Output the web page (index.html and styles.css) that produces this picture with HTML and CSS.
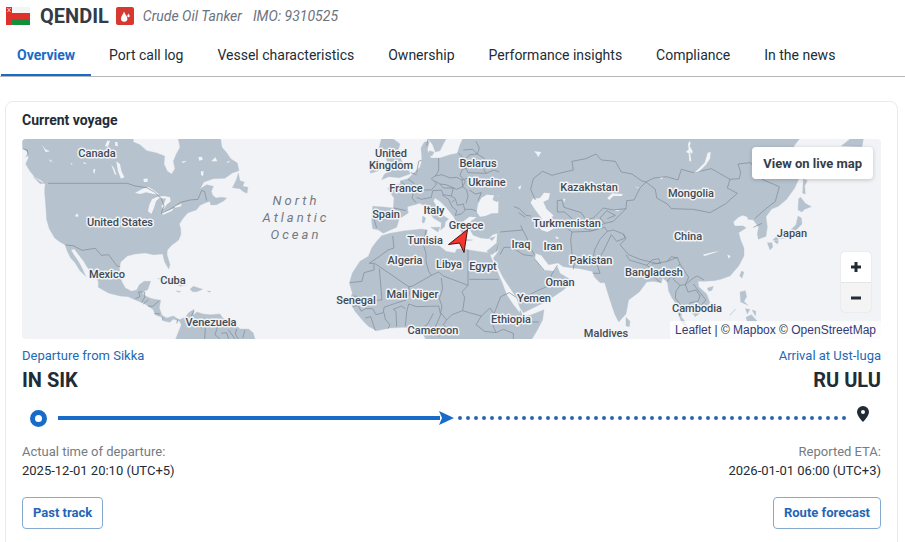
FILE: index.html
```html
<!DOCTYPE html>
<html lang="en">
<head>
<meta charset="utf-8">
<title>QENDIL - Crude Oil Tanker</title>
<link rel="stylesheet" href="styles.css">
</head>
<body>
<header class="vessel">
  <svg class="flag" viewBox="0 0 24 18" role="img" aria-label="Oman">
    <path fill="#f4f4f4" d="M0 0h24v6H0z"/><path fill="#e0302c" d="M0 0h6v18H0zM6 6h18v6H6z"/><path fill="#12903c" d="M6 12h18v6H6z"/>
    <path d="M1 1l4 4M5 1L1 5M3 1v4" stroke="#f6b9b5" stroke-width=".8"/>
  </svg>
  <h1 class="vessel-name">QENDIL</h1>
  <svg class="type-icon" viewBox="0 0 18 18" aria-hidden="true">
    <rect width="18" height="18" rx="2" fill="#d73831"/>
    <path fill="#fff" d="M8 4.500C7.500 7 5 9 5 11.500a3.200 3.200 0 0 0 6.400 0C11.400 9 8.500 7 8 4.500zM12.500 6.500c-.3 1-1.200 1.500-1.200 2.500a1.200 1.200 0 0 0 2.400 0c0-1-.9-1.500-1.200-2.500z"/>
  </svg>
  <p class="vessel-meta"><span>Crude Oil Tanker</span><span>IMO: 9310525</span></p>
</header>

<nav class="tabs">
  <a class="tab active" href="#overview" aria-current="page">Overview</a>
  <a class="tab" href="#log">Port call log</a>
  <a class="tab" href="#characteristics">Vessel characteristics</a>
  <a class="tab" href="#ownership">Ownership</a>
  <a class="tab" href="#performance">Performance insights</a>
  <a class="tab" href="#compliance">Compliance</a>
  <a class="tab" href="#news">In the news</a>
</nav>

<main class="card" id="overview">
  <h2 class="card-title">Current voyage</h2>
  <div class="map">
    <svg class="map-art" viewBox="22 139 859 200" preserveAspectRatio="xMidYMid slice" role="img" aria-label="World map with vessel position">
      <!-- Americas -->
      <g transform="translate(20 138) scale(.33333)">
        <g class="land">
          <path d="M6 3L8 30 22 42 25 60 17 78 30 100 45 118 66 128 76 140 74 150 74 165 77 200 80 245 88 272 104 300 120 312 135 320 142 340 152 360 165 374 180 398 197 415 186 390 174 368 160 348 153 335 163 333 177 352 190 368 200 385 218 408 235 430 235 448 265 465 300 474 325 476 345 485 375 498 400 515 405 530 425 538 432 549 450 553 460 543 478 550 484 560 467 603H705L700 585 686 573 660 573 640 556 608 540 600 528 570 530 550 528 530 522 520 532 522 514 506 524 496 538 478 545 460 534 440 540 426 532 418 510 422 487 396 482 376 474 365 462 383 455 392 430 372 430 358 440 350 456 335 460 316 450 306 432 300 412 298 390 302 372 322 354 345 348 375 345 400 350 428 348 434 372 446 393 450 380 441 350 442 336 455 322 476 306 483 288 482 272 478 258 490 240 503 225 530 215 540 202 555 195 570 190 572 201 590 200 612 188 620 180 604 178 588 180 578 172 574 160 580 145 560 140 540 152 552 132 580 122 615 121 637 105 657 98 652 75 632 62 620 44 606 28 602 3H475L480 28 468 50 460 70 465 92 455 108 442 100 432 78 434 54 410 45 380 38 360 20 340 12V3z"/>
          <path d="M655 105L649 125 637 149 660 152 668 160 681 166 684 148 668 145 673 132 660 128z"/>
          <path d="M413 422L440 420 470 430 500 440 482 445 460 434 430 426zM510 454L520 445 548 454 530 461 518 461zM468 459L482 460 478 463zM562 459L573 460 568 463zM40 116L60 130 72 136 60 137z"/>
        </g>
        <g class="water">
          <path d="M345 165L368 152 386 147 404 158 418 170 400 168 378 163 362 168zM412 176L396 184 388 200 384 220 394 228 402 210 408 190 418 180 438 182 432 196 424 204 430 214 440 200 452 190 450 178 432 174zM424 224L440 218 462 211 455 219 430 230zM462 205L485 197 483 205 466 209z"/>
          <path d="M274 80L282 90 290 112 284 108zM289 70L300 78 304 98 313 118 303 122 294 100zM66 20L76 34 90 40 77 42zM370 122L384 122 382 132 372 132zM222 92L226 94 223 108 219 100zM166 232L172 226 176 235 168 237zM484 71L500 68 490 75zM535 58L546 56 548 65 538 68zM574 70L586 58 592 70zM543 100L551 100 549 115 543 110zM620 72L632 68 624 75zM152 74L158 78 154 80zM190 72L200 76 192 78zM255 25L262 8 270 8 264 26zM285 12L292 12 294 24 286 24zM86 64L98 70 92 71z"/>
        </g>
        <path class="border" d="M84 136H322L345 144 380 149 402 161 424 182 432 203 424 226 450 214 482 193 510 186 534 184 545 157 554 161 560 188M136 321L160 323 186 337 226 331 244 352 266 350 290 383 301 387M346 482L360 476 356 462 374 462 374 478 365 493M385 485L370 498M418 488L398 505 384 504M404 526L420 528M427 538L429 548M474 544L470 556M522 518L514 535 520 560 545 570M556 570L554 603M600 545L585 590 600 603M604 586L620 584 626 603M625 575L645 603M650 573L646 588 655 603M675 576L668 600M8 32L22 36 24 50 17 56"/>
      </g>
      <!-- Europe and Africa -->
      <g transform="translate(340 138) scale(.33333)">
        <g class="land">
          <path d="M125 293L150 286 190 279 225 275 245 273 262 276 260 292 270 304 268 316 300 325 318 340 345 345 350 334 370 332 388 336 420 341 450 345 452 355 465 385 485 430 500 470 520 500 540 525 550 536 575 530 612 515 608 545 590 580 574 606H258L250 590 235 583 215 570 190 568 150 570 110 578 85 565 70 550 45 520 34 500 30 485 37 465 28 435 37 405 60 370 85 355 95 330 110 310z"/>
          <path d="M98 205L130 207 160 210 162 180 143 152 152 140 180 138 182 128 204 122 222 104 240 88 246 66 243 30 253 12 268 10 262 36 273 60 300 60 330 50 352 46 360 20 368 3H700V290L475 276 478 310 470 340 455 350 440 340 470 315 472 286 458 290 445 302 422 300 400 292 388 272 392 264 372 266 378 292 366 284 352 262 342 238 322 212 300 190 285 180 280 190 292 208 302 228 326 243 316 252 314 266 302 276 304 254 280 240 256 205 240 196 224 200 202 206 205 225 178 242 170 268 146 278 130 286 114 275 98 272 95 250z"/>
          <path d="M125 125L146 116 178 119 210 108 204 90 186 70 172 44 180 18 160 3H124L117 30 130 42 142 70 136 84 148 98 132 110zM94 75L114 64 122 74 116 98 92 106 88 90zM265 3H318L310 18 300 38 286 42 278 20zM268 38L282 42 276 54 266 50zM248 234L257 240 252 256 246 252zM252 214L258 220 254 230zM272 268L300 268 294 282zM374 304L398 306 376 309zM448 301L466 296 456 308z"/>
        </g>
        <path class="water" d="M410 222L414 198 424 180 440 170 462 172 458 186 470 192 482 186 474 174 498 164 494 186 510 198 526 208 530 226 508 234 480 226 456 226 436 234 420 236zM368 252L388 236 410 238 392 250 396 262 386 266zM552 146L546 140 542 150 536 155 544 156zM484 6L494 3 492 12z"/>
        <path class="border" d="M98 216L110 218 108 236 103 246 110 270M162 210L198 218M182 130L202 148 222 160 216 180 228 194M204 123L222 136 220 152M296 60V98L286 114 274 122 290 138 274 156 250 156M246 66L236 70 230 104M212 104L230 110M286 114L306 110 330 120 350 118 366 126 368 146 350 154 332 146 318 140 300 138 284 128M300 138L310 150 340 150 334 174 310 170 304 156 278 158 274 178 244 184 230 178M306 170L326 184 336 206 350 218 346 232M334 174L346 182 352 202 370 198 374 214 396 214 410 220M368 146L380 156 384 176 378 196M368 146L376 130 360 112 366 96 378 90 374 64 354 44M378 90L384 104 438 106 430 92 442 80 434 62 412 48 390 50 374 64M370 36L398 34 412 48M412 48L418 30 408 10M388 156L406 168 424 164 414 188M438 106L462 96 488 106 500 120 514 122 514 146 490 160M366 126L384 120M346 232L364 228 376 216M344 186L336 192M264 3L260 24M158 294L162 330 144 336 120 354 88 376 102 376V396L72 404 66 430 30 434M104 376L206 446 218 444 274 412 266 400 258 370V346L250 320 254 300 258 276M274 412L296 402 310 414 384 442V336M388 424H476M304 420L308 452 298 482 306 504 302 524 320 546 336 530 368 518 374 478 366 462 384 442M118 392L126 486 74 488 56 476 40 474M206 446L208 470 198 486 166 496 132 508 130 524 108 530M206 498L230 506 296 504M206 498L200 522 196 564M196 512L184 504 160 514 168 520 170 566M132 524L136 544 150 560 144 572M108 530L98 512 76 512 64 520 54 502 38 506M76 540L92 536 106 578M280 526L262 560 236 574M296 504L302 530 284 572 296 596M320 546L310 560 326 580 360 576M368 518L388 524 424 534 450 510 462 528 482 476 508 464 540 486 550 520M424 534L408 560 434 580 468 584 490 574M462 528L456 556 468 584M490 574L520 586 520 606M550 534L568 552 596 552M540 518L548 536M470 340L478 310M482 282L496 280 548 274 556 300 546 306 520 314 490 338 472 350M548 274L562 296 570 330M504 348L520 354M530 214L560 228 582 256M540 228L552 246 560 268 546 276M546 216L566 218 582 236M600 106L586 112 580 134 594 150 600 168"/>
      </g>
      <!-- Asia, western part -->
      <g transform="translate(480 138) scale(.33333)">
        <path class="land" d="M60 3H958L942 24 946 60 956 124 944 150 920 184 895 205 875 213 858 236 862 268 858 295 835 304 832 288 836 268 820 246 804 244 802 236 788 232 775 238 760 252 764 264 790 264 798 270 776 284 782 306 792 330 792 354 776 384 750 414 722 424 702 428 672 430 654 430 656 446 680 468 690 494 668 518 646 536 640 528 622 518 606 512 604 536 616 552 622 570 606 556 596 530 590 500 576 480 566 460 562 432 548 420 544 434 520 430 500 432 478 462 446 486 438 528 416 552 404 528 388 480 374 434 360 434 344 418 336 400 300 392 250 386 234 375 206 380 184 352 166 346 165 364 190 396 222 400 232 386 240 406 280 430 250 456 200 490 130 524 120 510 110 480 70 420 50 380 40 360 55 340V230z"/>
        <path class="land" d="M438 538L450 550 448 566 438 564z"/>
        <path class="water" d="M152 194L158 182 180 180 192 164 210 166 206 184 190 192 200 214 220 232 214 242 220 272 202 282 184 276 172 258 186 242 166 216zM382 180L396 166 428 168 426 174 400 174 388 186zM162 40L184 42 174 58 170 48zM226 294L238 300 230 304zM402 216L420 216 412 220zM464 144L482 152 472 150zM538 118L552 118 544 124zM250 182L256 182 252 194zM114 148L124 142 120 156z"/>
        <path class="border" d="M166 186L152 154 160 122 188 100 216 112 246 104 280 96 276 70 318 62 348 48 364 66 406 70 424 102 456 108 484 128 498 132 480 150 462 186 440 188 438 212 400 216 370 210 356 224 340 240 318 246 304 224 252 208 246 186 232 188V222M498 132L522 120 560 116 594 126 604 94 640 104 694 92 750 124 778 122 782 104 774 78 812 74 846 124 898 146 886 190 858 212 824 242M498 132L526 154 530 180 562 198 574 212 640 214 690 224 736 198 772 166 742 150 750 124M232 222L254 222 280 246 306 270 338 278 374 256 400 250 438 212M220 264L240 256 276 282 330 280 374 268 382 280 360 304 344 336 340 358 310 368 284 368 276 346 272 306 276 282M284 368L280 394M382 280L400 276 430 288 438 302 420 320 446 350 480 364 530 376 562 370 592 358 600 378 580 402 562 432M430 288L436 300 410 310 394 290 370 340 350 374 360 406 340 406M438 350L448 366 500 382 516 392 522 416 542 434M500 382L516 366 536 362 542 376 514 378M562 370L574 356 592 360M594 402L580 424 600 442 616 440 626 418 600 378M600 442L588 460 586 480 600 498 598 534M616 440L624 462 648 456 660 474 654 490 630 494 622 514M616 440L640 420 652 414 672 426M640 438L660 464 678 486 658 508M374 256L360 240 380 218 406 232 382 242M102 206L118 212 138 232 154 234M116 224L136 238M60 282L128 276 140 298 146 320 164 352M60 350L72 328 96 328 130 350 160 354M128 276L122 262M165 364L192 396M216 408L200 446 164 462 130 480M232 382L216 408M820 268L846 256"/>
      </g>
      <!-- Asia, eastern islands and lakes -->
      <g transform="translate(670 138) scale(.33333)">
        <path class="land" d="M386 182L392 178 406 196 424 206 404 214 396 222 384 216zM384 234L394 240 396 258 384 270 370 284 346 300 326 302 320 308 308 306 324 292 348 288 366 272 378 260zM292 314L306 314 308 328 300 336zM312 310L326 308 322 318zM400 122L412 128 404 144 406 168 398 166zM514 24L540 3H580L576 26zM214 400L222 402 216 420 209 414zM112 450L130 445 126 457 116 460zM210 462L226 458 230 476 222 490 234 502 212 492zM226 512L240 514 232 528zM246 516L258 520 256 534zM228 538L244 530 262 550H232zM198 512L180 532 182 528z"/>
        <path class="water" d="M113 44L122 42 120 62 108 80 88 100 72 105 86 92 104 74zM54 18L59 8 62 16 59 24 68 40 66 48 60 42 64 70 58 70 56 46 48 42 56 34zM98 350L130 342 148 340 122 348 104 354zM172 350L182 354 176 362z"/>
      </g>
      <g class="labels">
        <text x="97" y="157">Canada</text><text x="120" y="226">United States</text><text x="107" y="278">Mexico</text><text x="173" y="284">Cuba</text><text x="211" y="326">Venezuela</text>
        <text x="391" y="157">United</text><text x="391" y="169">Kingdom</text><text x="406" y="192">France</text><text x="386" y="218">Spain</text><text x="434" y="214">Italy</text><text x="478" y="167">Belarus</text><text x="487" y="186">Ukraine</text><text x="466" y="229">Greece</text><text x="425" y="244">Tunisia</text><text x="405" y="264">Algeria</text><text x="449" y="268">Libya</text><text x="483" y="270">Egypt</text><text x="356" y="304">Senegal</text><text x="397" y="298">Mali</text><text x="425" y="298">Niger</text><text x="433" y="334">Cameroon</text><text x="511" y="323">Ethiopia</text>
        <text x="589" y="191">Kazakhstan</text><text x="567" y="227">Turkmenistan</text><text x="521" y="248">Iraq</text><text x="553" y="250">Iran</text><text x="591" y="264">Pakistan</text><text x="560" y="286">Oman</text><text x="534" y="302">Yemen</text><text x="654" y="276">Bangladesh</text><text x="606" y="337">Maldives</text><text x="691" y="197">Mongolia</text><text x="688" y="240">China</text><text x="792" y="237">Japan</text><text x="697" y="312">Cambodia</text>
      </g>
      <g class="ocean"><text x="296" y="205">North</text><text x="296" y="222">Atlantic</text><text x="296" y="239">Ocean</text></g>
      <path d="M467.500 229.500L448.500 244.500 459.500 243 464 252.500z" fill="#f5352d" stroke="#4a1513" stroke-width="1"/>
    </svg>
    <button class="live" type="button">View on live map</button>
    <div class="zoom">
      <button type="button" aria-label="Zoom in"><svg viewBox="0 0 10 10"><path d="M0 5h10M5 0v10"/></svg></button>
      <button type="button" aria-label="Zoom out"><svg viewBox="0 0 10 10"><path d="M0 5h10"/></svg></button>
    </div>
    <div class="attribution"><a href="#leaflet">Leaflet</a> | © <a href="#mapbox">Mapbox</a> © <a href="#osm">OpenStreetMap</a></div>
  </div>

  <section class="ports">
    <div><a class="port-link" href="#sikka">Departure from Sikka</a><p class="port-code">IN SIK</p></div>
    <div class="end"><a class="port-link" href="#ust-luga">Arrival at Ust-luga</a><p class="port-code">RU ULU</p></div>
  </section>

  <div class="progress" role="img" aria-label="Voyage progress">
    <span class="origin"></span>
    <span class="done"></span>
    <svg class="arrow" viewBox="0 0 16 16"><path fill="#196bc9" d="M1 1L16 8 1 15 4 8z"/></svg>
    <svg class="remaining"><line x1="2" y1="2" x2="100%" y2="2"/></svg>
    <svg class="pin" viewBox="0 0 12 16"><path fill="#222c36" fill-rule="evenodd" d="M6 0a6 6 0 0 0-6 6c0 4 6 10 6 10s6-6 6-10a6 6 0 0 0-6-6zm0 4a2 2 0 1 1 0 4 2 2 0 0 1 0-4z"/></svg>
  </div>

  <section class="times">
    <div><p class="time-label">Actual time of departure:</p><p class="time">2025-12-01 20:10 (UTC+5)</p></div>
    <div class="end"><p class="time-label">Reported ETA:</p><p class="time">2026-01-01 06:00 (UTC+3)</p></div>
  </section>

  <div class="actions">
    <button class="outline" type="button">Past track</button>
    <button class="outline" type="button">Route forecast</button>
  </div>
</main>
</body>
</html>
```

FILE: styles.css
```css
* { box-sizing: border-box; }
body { margin: 0; background: #fff; color: #222c36; font-family: Roboto, "Liberation Sans", sans-serif; font-size: 14px; overflow: hidden; }
h1, h2, p { margin: 0; }
a { text-decoration: none; color: inherit; }
button { font-family: inherit; cursor: pointer; }

.vessel { display: flex; align-items: center; height: 32px; padding-left: 6px; }
.flag { width: 24px; height: 18px; }
.vessel-name { margin-left: 10px; font-size: 20px; line-height: 32px; font-weight: 700; color: #333b47; }
.type-icon { width: 18px; height: 18px; margin-left: 7px; }
.vessel-meta { display: flex; gap: 11px; margin-left: 9px; font-size: 14px; line-height: 30px; font-style: italic; color: #6b7280; }

.tabs { display: flex; gap: 2px; height: 45px; padding-left: 1px; border-bottom: 1px solid #b4b6b9; }
.tab { padding: 0 16px; line-height: 46px; white-space: nowrap; }
.tab.active { color: #196bc9; font-weight: 700; border-bottom: 2px solid #196bc9; }

.card { margin: 24px 7px 0 5px; padding: 9px 16px 24px; border: 1px solid #e8eaec; border-radius: 8px; }
.card-title { font-size: 14px; line-height: 18px; font-weight: 700; margin-bottom: 10px; }

.map { position: relative; height: 200px; background: #f2f3f6; border-radius: 4px; overflow: hidden; }
.map-art { display: block; width: 100%; height: 100%; }
.land { fill: #b6c3ce; stroke: #b6c3ce; stroke-width: 1; stroke-linejoin: round; }
.water { fill: #f2f3f6; }
.border { fill: none; stroke: #7b8893; stroke-width: 2; stroke-linejoin: round; }
.labels { font-size: 11px; font-weight: 500; fill: #414b55; text-anchor: middle; stroke: #f2f3f6; stroke-width: 3; stroke-linejoin: round; paint-order: stroke; }
.ocean { font-size: 13px; font-style: italic; letter-spacing: 3px; fill: #747981; text-anchor: middle; }

.live { position: absolute; top: 8px; right: 8px; height: 32px; padding: 0 11px; border: 0; border-radius: 4px; background: #fff; color: #343e49; font-size: 13px; font-weight: 700; box-shadow: 0 1px 4px rgba(0, 0, 0, .2); }
.zoom { position: absolute; top: 113px; right: 10px; display: grid; width: 30px; border-radius: 4px; overflow: hidden; box-shadow: 0 0 1px rgba(0, 0, 0, .3); }
.zoom button { display: grid; place-items: center; height: 30px; padding: 0; border: 0; background: #fff; }
.zoom button + button { background: #f4f4f4; border-top: 1px solid #e4e5e7; }
.zoom svg { width: 10px; height: 10px; stroke: #222c36; stroke-width: 3; }
.attribution { position: absolute; right: 0; bottom: 0; padding: 0 5px; background: rgba(255, 255, 255, .75); color: #333; font: 12px/18px "Liberation Sans", sans-serif; }
.attribution a { color: #323a78; }

.ports, .times, .actions { display: flex; justify-content: space-between; }
.end { text-align: right; }
.ports { margin-top: 8px; }
.port-link { display: block; font-size: 13px; line-height: 18px; color: #2369b3; }
.port-code { font-size: 20px; line-height: 30px; font-weight: 700; }

.progress { display: flex; align-items: center; height: 18px; margin-top: 14px; padding: 0 12px 0 8px; }
.origin { flex: none; width: 17px; height: 17px; border: 5px solid #196bc9; border-radius: 50%; }
.done { flex: 381 1 0; height: 4px; margin-left: 11px; background: #196bc9; }
.arrow { flex: none; width: 16px; height: 16px; margin-left: -2px; }
.remaining { flex: 392 1 0; min-width: 0; height: 4px; margin: 0 7px 0 4px; }
.remaining line { stroke: #2a66a8; stroke-width: 4; stroke-linecap: round; stroke-dasharray: 0 8; }
.pin { flex: none; width: 12px; height: 16px; margin-bottom: 8px; }

.times { margin-top: 15px; font-size: 13px; line-height: 19px; }
.time-label { color: #747b83; }
.actions { margin-top: 17px; }
.outline { height: 32px; padding: 0 10px; border: 1px solid #86a9d1; border-radius: 4px; background: #fff; color: #1f66b6; font-size: 13px; line-height: 28px; font-weight: 700; }
```
